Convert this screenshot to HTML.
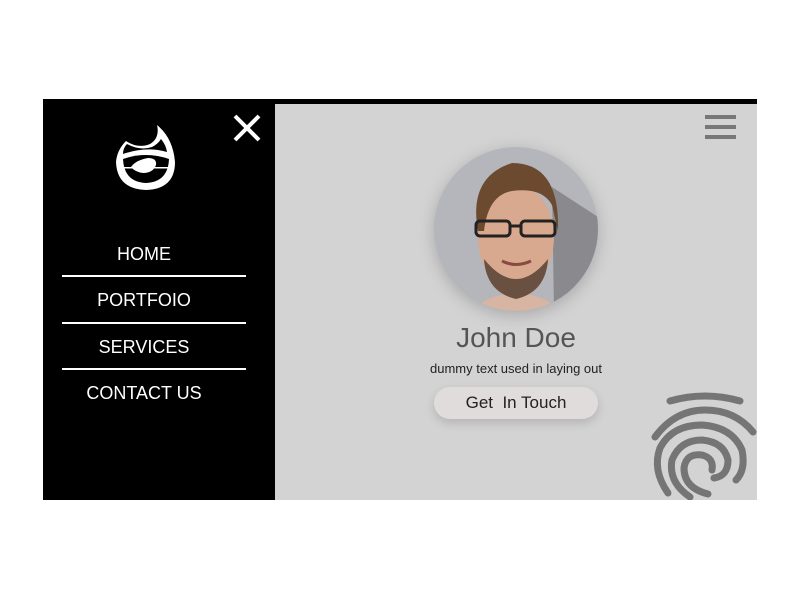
<!DOCTYPE html>
<html><head><style>
body{margin:0;width:800px;height:600px;background:#fff;position:relative;overflow:hidden;font-family:"Liberation Sans",sans-serif}
.side{position:absolute;left:43px;top:99px;width:232px;height:401px;background:#000}
.main{position:absolute;left:275px;top:99px;width:482px;height:401px;background:#d3d3d3;border-top:5px solid #000;box-sizing:border-box;overflow:hidden}
.nav{position:absolute;left:0;width:202px;text-align:center;color:#fff;font-size:18px}
.ln{position:absolute;left:19px;width:184px;height:2px;background:#fff}
.hb{position:absolute;left:430px;width:31px;height:4px;background:#777}
.txt{position:absolute;left:0;width:482px;text-align:center}
</style></head><body>
<div class="side">
<svg style="position:absolute;left:188px;top:13px" width="32" height="32" viewBox="0 0 32 32"><path d="M4 4L28 28M28 4L4 28" stroke="#fff" stroke-width="4"/></svg>
</div>
<svg style="position:absolute;left:113px;top:122px" width="64" height="70" viewBox="113 122 64 70">
<path d="M126 141 Q117 150 116 162 Q117 189 146 190 Q175 189 175 162 Q173 138 157 125 Q160 138 150 144 Q138 149 126 141Z" fill="#fff"/>
<path d="M123 159 Q146 151 169 159 Q168 182 146 183 Q124 182 123 159Z" fill="#000"/>
<path d="M127 144 Q140 151 152 147 Q158 144 161 139 Q166 145 167 152 Q146 146 123 154 Q123 148 127 144Z" fill="#000"/>
<path d="M131 167 Q136 160 148 158 Q157 158 156 165 Q153 173 143 173 Q135 172 131 167Z" fill="#fff"/>
<rect x="123" y="167" width="45" height="1.5" fill="#fff"/>
</svg>
<div class="side" style="background:none">
<div class="nav" style="top:145px">HOME</div>
<div class="ln" style="top:176px"></div>
<div class="nav" style="top:191px">PORTFOIO</div>
<div class="ln" style="top:223px"></div>
<div class="nav" style="top:238px">SERVICES</div>
<div class="ln" style="top:269px"></div>
<div class="nav" style="top:284px">CONTACT US</div>
</div>
<div class="main">
<div class="hb" style="top:11px"></div><div class="hb" style="top:21px"></div><div class="hb" style="top:31px"></div>
<svg style="position:absolute;left:159px;top:43px;filter:drop-shadow(0 4px 8px rgba(0,0,0,.2))" width="164" height="164" viewBox="0 0 164 164">
<defs><clipPath id="c"><circle cx="82" cy="82" r="82"/></clipPath></defs>
<g clip-path="url(#c)">
<rect width="164" height="164" fill="#b4b6bb"/>
<path d="M118 40 L164 70 L164 164 L120 164Z" fill="#8a8a8e"/>
<path d="M40 164 Q50 148 82 146 Q114 148 124 164Z" fill="#d8b4a2"/>
<ellipse cx="82" cy="90" rx="38" ry="52" fill="#d8a88f"/>
<path d="M44 84 Q34 30 78 16 Q126 16 124 84 L118 58 Q108 40 78 44 Q54 48 50 84Z" fill="#6b4a30"/>
<path d="M50 112 Q82 152 114 112 Q112 145 82 152 Q52 145 50 112Z" fill="#6a5040"/>
<rect x="42" y="74" width="34" height="15" rx="4" fill="none" stroke="#222" stroke-width="3"/>
<rect x="87" y="74" width="34" height="15" rx="4" fill="none" stroke="#222" stroke-width="3"/>
<path d="M76 79 L87 79" stroke="#222" stroke-width="3"/>
<path d="M68 114 Q82 121 97 114" stroke="#8a4a40" stroke-width="3" fill="none"/>
</g></svg>
<div class="txt" style="top:218px;font-size:28px;color:#555">John Doe</div>
<div class="txt" style="top:257px;font-size:13px;color:#222">dummy text used in laying out</div>
<div style="position:absolute;left:159px;top:283px;width:164px;height:32px;border-radius:16px;background:#e0dcdb;box-shadow:0 4px 10px rgba(0,0,0,.15);text-align:center;line-height:32px;font-size:17px;color:#222">Get&nbsp; In Touch</div>
</div>
<svg style="position:absolute;left:640px;top:385px" width="117" height="115" viewBox="640 385 117 115" fill="none" stroke="#757575" stroke-width="7" stroke-linecap="round">
<path d="M670 401 Q705 391 740 401"/>
<path d="M655 437 Q675 410 705 410 Q735 410 753 432"/>
<path d="M668 493 Q652 470 660 448 Q672 425 702 425 Q732 427 742 450 Q746 470 736 480"/>
<path d="M690 497 Q668 482 672 460 Q680 440 702 440 Q724 442 728 460 Q728 476 714 478"/>
<path d="M708 494 Q684 488 684 468 Q686 453 702 455 Q714 458 712 470"/>
</svg>
</body></html>
